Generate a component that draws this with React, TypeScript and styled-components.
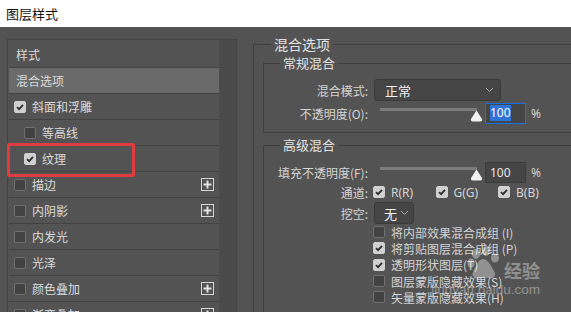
import React from "react";
import styled, { createGlobalStyle } from "styled-components";

const GlobalStyle = createGlobalStyle`
  html, body {
    margin: 0;
    padding: 0;
    background: #535353;
  }
  * {
    box-sizing: border-box;
  }
`;

type Effect = {
  name: string;
  check?: boolean;
  checked?: boolean;
  indent?: boolean;
  active?: boolean;
  plus?: boolean;
};

const effects: Effect[] = [
  { name: "样式" },
  { name: "混合选项", active: true },
  { name: "斜面和浮雕", check: true, checked: true },
  { name: "等高线", check: true, indent: true },
  { name: "纹理", check: true, checked: true, indent: true },
  { name: "描边", check: true, plus: true },
  { name: "内阴影", check: true, plus: true },
  { name: "内发光", check: true },
  { name: "光泽", check: true },
  { name: "颜色叠加", check: true, plus: true },
  { name: "渐变叠加", check: true, plus: true },
];

const options = [
  { label: "将内部效果混合成组 (I)", checked: false },
  { label: "将剪贴图层混合成组 (P)", checked: true },
  { label: "透明形状图层(T)", checked: true },
  { label: "图层蒙版隐藏效果(S)", checked: false },
  { label: "矢量蒙版隐藏效果(H)", checked: false },
];

const CheckBox = ({ checked }: { checked?: boolean }) => (
  <Box $checked={checked}>
    {checked && (
      <svg width="8" height="8" viewBox="0 0 8 8">
        <path d="M1 4.2 L3.1 6.2 L7 1.8" stroke="#2e2e2e" strokeWidth="1.8" fill="none" />
      </svg>
    )}
  </Box>
);

const Chevron = () => (
  <svg width="9" height="6" viewBox="0 0 9 6">
    <path d="M1 1 L4.5 4.5 L8 1" stroke="#a8a8a8" strokeWidth="1" fill="none" />
  </svg>
);

const PlusIcon = () => (
  <PlusBox>
    <svg width="13" height="13" viewBox="0 0 13 13">
      <rect x="0.5" y="0.5" width="12" height="12" fill="none" stroke="#d6d6d6" />
      <path d="M6.5 2.5 V10.5 M2.5 6.5 H10.5" stroke="#e2e2e2" strokeWidth="2" />
    </svg>
  </PlusBox>
);

const Slider = () => (
  <SliderWrap>
    <Track />
    <Thumb>
      <svg width="13" height="12" viewBox="0 0 13 12">
        <path d="M6.5 0.5 L12 9 Q12.5 11.5 10 11.5 H3 Q0.5 11.5 1 9 Z" fill="#f2f2f2" />
      </svg>
    </Thumb>
  </SliderWrap>
);

const App: React.FC = () => {
  return (
    <Window>
      <GlobalStyle />
      <TitleBar>图层样式</TitleBar>
      <Body>
        <StylePanel>
          <List>
            {effects.map((e) => (
              <Row key={e.name} $active={e.active} $indent={e.indent}>
                {e.check && <CheckBox checked={e.checked} />}
                <RowText $check={e.check}>{e.name}</RowText>
                {e.plus && <PlusIcon />}
              </Row>
            ))}
          </List>
          <ScrollColumn />
          <Highlight />
        </StylePanel>

        <Options>
          <Group>
            <Legend $big>混合选项</Legend>
            <SubGroup>
              <Legend>常规混合</Legend>
              <Section $top={8} $bottom={8}>
                <FormRow>
                  <Label>混合模式:</Label>
                  <Select $width={127}>
                    <span>正常</span>
                    <Chevron />
                  </Select>
                </FormRow>
                <FormRow $gap={1}>
                  <Label>不透明度(O):</Label>
                  <Slider />
                  <NumberBox $focused>
                    <Selected>100</Selected>
                  </NumberBox>
                  <Percent>%</Percent>
                </FormRow>
              </Section>
            </SubGroup>

            <SubGroup $gap={4}>
              <Legend>高级混合</Legend>
              <Section $top={8} $bottom={20}>
                <FormRow>
                  <Label>填充不透明度(F):</Label>
                  <Slider />
                  <NumberBox>100</NumberBox>
                  <Percent>%</Percent>
                </FormRow>
                <FormRow $gap={1} $height={16}>
                  <Label>通道:</Label>
                  <Channels>
                    <Channel>
                      <CheckBox checked />
                      <span>R(R)</span>
                    </Channel>
                    <Channel>
                      <CheckBox checked />
                      <span>G(G)</span>
                    </Channel>
                    <Channel>
                      <CheckBox checked />
                      <span>B(B)</span>
                    </Channel>
                  </Channels>
                </FormRow>
                <FormRow $gap={2}>
                  <Label>挖空:</Label>
                  <Select $width={40} $small>
                    <span>无</span>
                    <Chevron />
                  </Select>
                </FormRow>
                <CheckList>
                  {options.map((o) => (
                    <CheckRow key={o.label}>
                      <CheckBox checked={o.checked} />
                      <span>{o.label}</span>
                    </CheckRow>
                  ))}
                </CheckList>
              </Section>
            </SubGroup>
          </Group>
        </Options>
      </Body>

      <Watermark>
        <WatermarkTop>
          <svg width="34" height="34" viewBox="0 0 34 34">
            <g fill="#ffffff">
              <ellipse cx="9" cy="8" rx="4" ry="5" />
              <ellipse cx="19" cy="5" rx="4" ry="5" />
              <ellipse cx="28" cy="12" rx="4" ry="4.5" />
              <ellipse cx="4" cy="17" rx="3.5" ry="4.5" />
              <path d="M16 13 C11 13 8 22 6 26 C4 31 9 34 13 32 C16 31 18 31 21 32 C26 34 30 30 27 25 C24 20 21 13 16 13 Z" />
            </g>
          </svg>
          <WatermarkText>经验</WatermarkText>
        </WatermarkTop>
        <WatermarkUrl>jingyan.baidu.com</WatermarkUrl>
      </Watermark>
    </Window>
  );
};

export default App;

const Window = styled.div`
  position: relative;
  width: 571px;
  height: 312px;
  overflow: hidden;
  display: flex;
  flex-direction: column;
  font-family: "Noto Sans CJK SC", "Liberation Sans", sans-serif;
`;

const TitleBar = styled.div`
  height: 27px;
  flex-shrink: 0;
  background: #ffffff;
  padding-left: 6px;
  font-size: 13px;
  line-height: 27px;
  color: #111111;
`;

const Body = styled.div`
  flex: 1;
  display: flex;
  align-items: flex-start;
  background: #535353;
  overflow: hidden;
`;

const StylePanel = styled.div`
  position: relative;
  flex-shrink: 0;
  display: flex;
  margin: 12px 0 0 7px;
  width: 230px;
  height: 300px;
  border: 1px solid #434343;
  border-bottom: none;
`;

const List = styled.div`
  width: 211px;
  padding: 2px 0 0 1px;
`;

const ScrollColumn = styled.div`
  flex: 1;
  background: #4a4a4a;
  border-left: 1px solid #4d4d4d;
`;

const Row = styled.div<{ $active?: boolean; $indent?: boolean }>`
  display: flex;
  align-items: center;
  height: 26px;
  padding-left: ${(p) => (p.$indent ? 15 : 5)}px;
  padding-right: 5px;
  border-bottom: 1px solid #424242;
  background: ${(p) => (p.$active ? "#6a6a6a" : "transparent")};
  font-size: 12px;
  color: #dadada;
`;

const RowText = styled.span<{ $check?: boolean }>`
  flex: 1;
  margin-left: ${(p) => (p.$check ? 6 : 2)}px;
  line-height: 16px;
`;

const Box = styled.span<{ $checked?: boolean }>`
  display: inline-flex;
  align-items: center;
  justify-content: center;
  flex-shrink: 0;
  width: 12px;
  height: 12px;
  border-radius: 2px;
  border: 1px solid ${(p) => (p.$checked ? "#d0d0d0" : "#707070")};
  background: ${(p) => (p.$checked ? "#d0d0d0" : "#424242")};
`;

const PlusBox = styled.span`
  display: flex;
  width: 13px;
  height: 13px;
`;

const Highlight = styled.div`
  position: absolute;
  left: -1px;
  top: 103px;
  width: 128px;
  height: 34px;
  border: 3px solid #e03c40;
  border-radius: 2px;
  pointer-events: none;
`;

const Options = styled.div`
  flex-shrink: 0;
  margin: 8px 0 0 16px;
  width: 340px;
`;

const Group = styled.fieldset`
  margin: 0;
  padding: 0 0 20px 9px;
  border: 1px solid #3e3e3e;
  min-width: 0;
`;

const SubGroup = styled.fieldset<{ $gap?: number }>`
  margin: ${(p) => p.$gap ?? 2}px 0 0 0;
  padding: 0;
  border: 1px solid #3e3e3e;
  min-width: 0;
`;

const Legend = styled.legend<{ $big?: boolean }>`
  margin-left: ${(p) => (p.$big ? 8 : 16)}px;
  padding: 0 3px;
  font-size: ${(p) => (p.$big ? 14 : 13)}px;
  line-height: ${(p) => (p.$big ? 18 : 16)}px;
  color: #e2e2e2;
`;

const Section = styled.div<{ $top: number; $bottom: number }>`
  padding: ${(p) => p.$top}px 0 ${(p) => p.$bottom}px 0;
`;

const FormRow = styled.div<{ $gap?: number; $height?: number }>`
  display: flex;
  align-items: center;
  height: ${(p) => p.$height ?? 22}px;
  margin-top: ${(p) => p.$gap ?? 0}px;
  font-size: 12px;
  color: #d4d4d4;
`;

const Label = styled.span`
  flex-shrink: 0;
  width: 104px;
  text-align: right;
  white-space: nowrap;
`;

const Select = styled.div<{ $width: number; $small?: boolean }>`
  display: flex;
  align-items: center;
  justify-content: space-between;
  flex-shrink: 0;
  margin-left: 6px;
  width: ${(p) => p.$width}px;
  height: 22px;
  padding: ${(p) => (p.$small ? "0 4px 0 9px" : "0 6px 0 10px")};
  background: #454545;
  border: 1px solid #3a3a3a;
  border-radius: 3px;
  font-size: 13px;
  color: #f0f0f0;
  white-space: nowrap;
`;

const SliderWrap = styled.div`
  position: relative;
  flex-shrink: 0;
  margin-left: 12px;
  width: 103px;
  height: 22px;
`;

const Track = styled.div`
  margin-top: 6px;
  width: 97px;
  height: 3px;
  background: #7c7c7c;
`;

const Thumb = styled.div`
  position: absolute;
  left: 90px;
  top: 8px;
  display: flex;
`;

const NumberBox = styled.div<{ $focused?: boolean }>`
  display: flex;
  align-items: center;
  margin-left: 2px;
  width: 41px;
  height: 21px;
  padding-left: 4px;
  background: #454545;
  border: 1px solid ${(p) => (p.$focused ? "#1473e6" : "#3a3a3a")};
  font-family: "Noto Sans", "Liberation Sans", sans-serif;
  font-size: 12px;
  color: #e6e6e6;
`;

const Selected = styled.span`
  background: #2f73d8;
  color: #ffffff;
  line-height: 16px;
`;

const Percent = styled.span`
  margin-left: 5px;
  font-family: "Noto Sans", "Liberation Sans", sans-serif;
  font-size: 12px;
  color: #d4d4d4;
`;

const Channels = styled.div`
  display: flex;
  margin-left: 5px;
`;

const Channel = styled.label`
  display: flex;
  align-items: center;
  gap: 6px;
  width: 62.5px;
  font-family: "Noto Sans", "Liberation Sans", sans-serif;
  font-size: 12px;
  color: #d4d4d4;
`;

const CheckList = styled.div`
  display: flex;
  flex-direction: column;
  padding-left: 109px;
`;

const CheckRow = styled.label`
  display: flex;
  align-items: center;
  gap: 6px;
  height: 16.3px;
  font-size: 12px;
  color: #d4d4d4;
`;

const Watermark = styled.div`
  position: absolute;
  right: 31px;
  top: 246px;
  display: flex;
  flex-direction: column;
  align-items: flex-end;
  opacity: 0.36;
  pointer-events: none;
`;

const WatermarkTop = styled.div`
  display: flex;
  align-items: flex-end;
  gap: 3px;
`;

const WatermarkText = styled.span`
  font-size: 18px;
  font-weight: bold;
  line-height: 19px;
  color: #ffffff;
`;

const WatermarkUrl = styled.span`
  margin-top: 3px;
  font-family: "Liberation Sans", sans-serif;
  font-size: 13.5px;
  line-height: 13px;
  color: #ffffff;
`;
